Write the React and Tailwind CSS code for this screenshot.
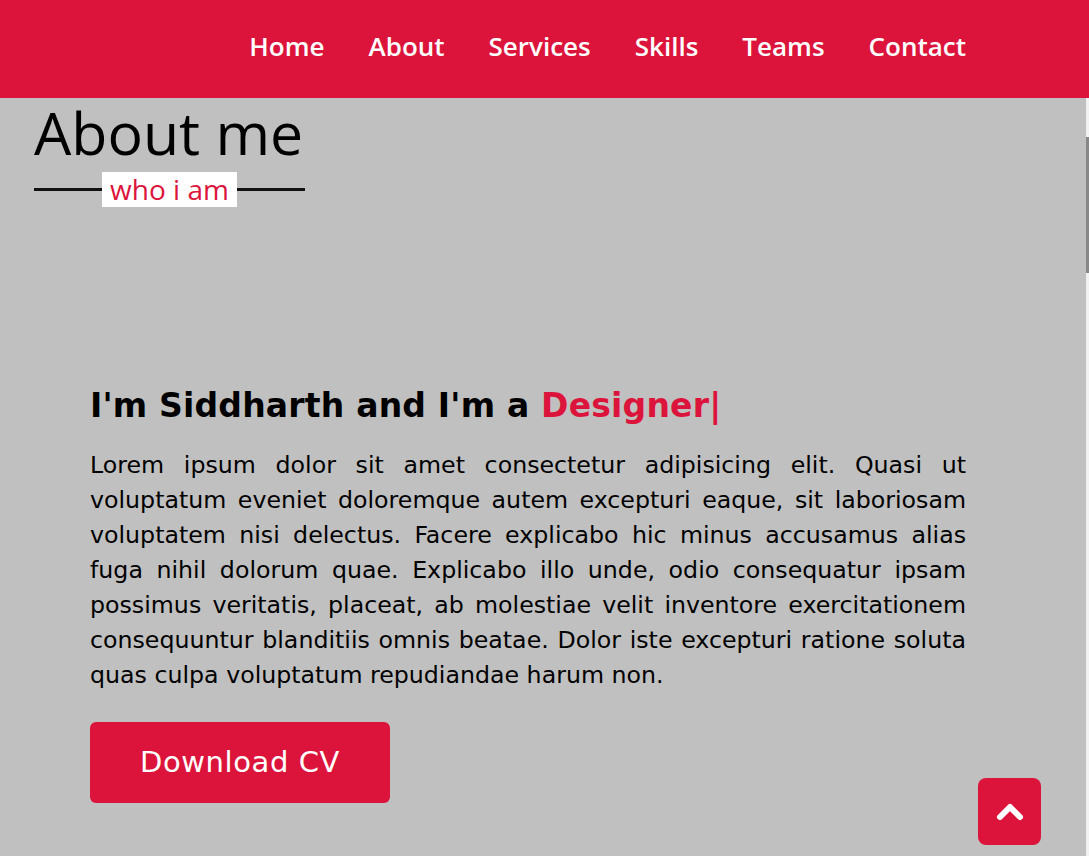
import React from "react";

const links = ["Home", "About", "Services", "Skills", "Teams", "Contact"];

const lines = [
  "Lorem ipsum dolor sit amet consectetur adipisicing elit. Quasi ut",
  "voluptatum eveniet doloremque autem excepturi eaque, sit laboriosam",
  "voluptatem nisi delectus. Facere explicabo hic minus accusamus alias",
  "fuga nihil dolorum quae. Explicabo illo unde, odio consequatur ipsam",
  "possimus veritatis, placeat, ab molestiae velit inventore exercitationem",
  "consequuntur blanditiis omnis beatae. Dolor iste excepturi ratione soluta",
  "quas culpa voluptatum repudiandae harum non.",
];

const App = () => {
  return (
    <div className="w-full h-[856px] overflow-hidden bg-[#c0c0c0] flex flex-col">
      <header className="h-[98px] shrink-0 bg-[#dc143c] flex items-center justify-end pr-[123px] pb-[6px]">
        <ul className="flex gap-[44px] font-['Open_Sans',sans-serif] font-semibold text-[26px] text-white">
          {links.map((l) => (
            <li key={l}>
              <a href="#">{l}</a>
            </li>
          ))}
        </ul>
      </header>

      <div className="flex flex-1">
        <main className="flex-1">
          <div className="pl-[34px] pt-[2px] w-fit">
            <h1 className="font-['Open_Sans',sans-serif] font-medium text-[59px] leading-[64px] text-black">About me</h1>
            <div className="flex items-center mt-[8px] w-[271px]">
              <span className="flex-1 h-[3px] bg-[#111]"></span>
              <span className="bg-white text-[#dc143c] font-['Open_Sans',sans-serif] font-medium text-[28px] leading-[35px] px-[8px]">
                who i am
              </span>
              <span className="flex-1 h-[3px] bg-[#111]"></span>
            </div>
          </div>

          <section className="mt-[179px] pl-[90px] w-[966px] font-['DejaVu_Sans',sans-serif]">
            <h2 className="text-[33px] leading-[40px] font-bold text-black tracking-[0.2px]">
              I'm Siddharth and I'm a <span className="text-[#dc143c]">Designer|</span>
            </h2>
            <p className="mt-[22px] text-[23.7px] leading-[35px] text-black">
              {lines.map((t, i) => (
                <span
                  key={i}
                  className={
                    i < lines.length - 1
                      ? "block whitespace-nowrap text-justify [text-align-last:justify]"
                      : "block whitespace-nowrap"
                  }
                >
                  {t}
                </span>
              ))}
            </p>
            <button className="mt-[29px] w-[300px] h-[81px] rounded-[6px] bg-[#dc143c] text-white text-[29px] tracking-[0.6px]">
              Download CV
            </button>
          </section>
        </main>
        <div className="w-[3px] bg-[#f1f1f1] pt-[39px]">
          <div className="h-[136px] bg-[#888]"></div>
        </div>
      </div>

      <a
        href="#"
        className="fixed left-[978px] top-[778px] w-[63px] h-[67px] rounded-[8px] bg-[#dc143c] flex items-center justify-center"
      >
        <svg width="30" height="20" viewBox="0 0 30 20" fill="none">
          <path d="M5 15 L15 5 L25 15" stroke="white" strokeWidth="6" strokeLinecap="round" strokeLinejoin="round" />
        </svg>
      </a>
    </div>
  );
};

export default App;
